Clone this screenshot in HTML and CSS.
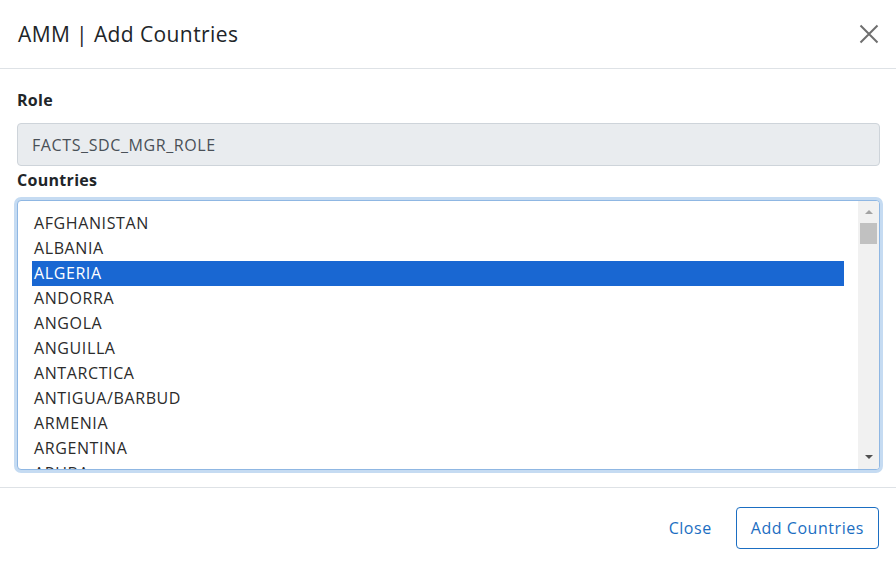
FILE: index.html
```html
<!DOCTYPE html>
<html>
<head>
<meta charset="utf-8">
<link rel="stylesheet" href="styles.css">
</head>
<body>
<div class="modal">
  <div class="modal-header">
    <h5 class="modal-title">AMM | Add Countries</h5>
    <button class="close-btn" aria-label="Close">
      <svg width="20" height="20" viewBox="0 0 20 20"><path d="M1.5 1.5 L18.5 18.5 M18.5 1.5 L1.5 18.5" stroke="#6f6f6f" stroke-width="2" fill="none"/></svg>
    </button>
  </div>
  <div class="modal-body">
    <label class="label label-role">Role</label>
    <div class="input">FACTS_SDC_MGR_ROLE</div>
    <label class="label label-countries">Countries</label>
    <div class="select">
      <div class="options">
        <div class="opt">AFGHANISTAN</div>
        <div class="opt">ALBANIA</div>
        <div class="opt selected">ALGERIA</div>
        <div class="opt">ANDORRA</div>
        <div class="opt">ANGOLA</div>
        <div class="opt">ANGUILLA</div>
        <div class="opt">ANTARCTICA</div>
        <div class="opt">ANTIGUA/BARBUD</div>
        <div class="opt">ARMENIA</div>
        <div class="opt">ARGENTINA</div>
        <div class="opt">ARUBA</div>
      </div>
      <div class="scrollbar">
        <div class="arrow-up"></div>
        <div class="thumb"></div>
        <div class="track"></div>
        <div class="arrow-down"></div>
      </div>
    </div>
  </div>
  <div class="modal-footer">
    <button class="btn btn-link">Close</button>
    <button class="btn btn-outline">Add Countries</button>
  </div>
</div>
</body>
</html>
```
FILE: styles.css
```css
* { box-sizing: border-box; }
html, body { margin: 0; padding: 0; background: #fff; }
body {
  font-family: "Open Sans", "Noto Sans", sans-serif;
  color: #212529;
  width: 896px;
  height: 565px;
  overflow: hidden;
}
.modal { width: 896px; height: 565px; display: flex; flex-direction: column; }
.modal-header {
  height: 69px;
  display: flex;
  align-items: center;
  justify-content: space-between;
  padding: 0 17px 0 18px;
  border-bottom: 1px solid #dee2e6;
}
.modal-title {
  margin: 0;
  font-size: 21px;
  font-weight: 400;
  line-height: 30px;
  letter-spacing: 0.4px;
  color: #212529;
}
.close-btn {
  border: 0;
  background: transparent;
  padding: 0;
  width: 20px;
  height: 20px;
  display: flex;
}
.modal-body {
  padding: 19px 16px 17px 17px;
  display: flex;
  flex-direction: column;
}
.label {
  display: block;
  font-size: 16px;
  font-weight: 700;
  line-height: 24px;
  letter-spacing: 0.3px;
}
.label-role { margin-bottom: 11px; }
.label-countries { margin-top: 2px; margin-bottom: 8px; }
.input {
  height: 43px;
  border: 1px solid #ced4da;
  border-radius: 4px;
  background: #e9ecef;
  font-size: 16px;
  line-height: 24px;
  letter-spacing: 0.6px;
  padding: 9px 14px;
  color: #495057;
}
.select {
  height: 270px;
  border: 1px solid #8fb7e3;
  border-radius: 4px;
  box-shadow: 0 0 0 3px #c5dbf2;
  display: flex;
  overflow: hidden;
  background: #fff;
}
.options {
  flex: 1;
  padding: 10px 14px 0 14px;
  overflow: hidden;
}
.opt {
  height: 25px;
  line-height: 25px;
  font-size: 16px;
  letter-spacing: 0.6px;
  padding: 0 2px;
  color: #2b2b2b;
  white-space: nowrap;
}
.opt.selected { background: #1967d2; color: #fff; }
.scrollbar {
  width: 21px;
  background: #f1f1f1;
  display: flex;
  flex-direction: column;
  align-items: center;
  padding: 0 2px;
}
.arrow-up {
  margin-top: 9px;
  width: 0; height: 0;
  border-left: 4px solid transparent;
  border-right: 4px solid transparent;
  border-bottom: 4px solid #a3a3a3;
}
.thumb {
  margin-top: 9px;
  width: 17px;
  height: 21px;
  background: #c1c1c1;
}
.track { flex: 1; }
.arrow-down {
  margin-bottom: 10px;
  width: 0; height: 0;
  border-left: 4px solid transparent;
  border-right: 4px solid transparent;
  border-top: 4px solid #505050;
}
.modal-footer {
  border-top: 1px solid #dee2e6;
  display: flex;
  justify-content: flex-end;
  align-items: center;
  padding: 19px 17px 0 16px;
  gap: 9px;
}
.btn {
  font-family: inherit;
  font-size: 16px;
  line-height: 24px;
  letter-spacing: 0.55px;
  height: 42px;
  padding: 8px 14px;
  border-radius: 4px;
  background: transparent;
  color: #1b6ec2;
  border: 1px solid transparent;
}
.btn-outline { border-color: #1b6ec2; }
```
